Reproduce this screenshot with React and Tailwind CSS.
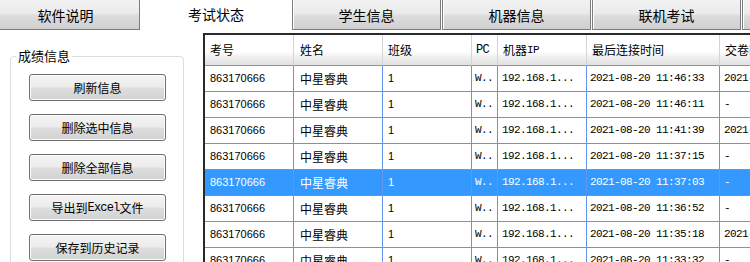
import React from 'react';

const rows = [
  ['2021-08-20 11:46:33', '2021-08-20 11:50:12', false],
  ['2021-08-20 11:46:11', '-', false],
  ['2021-08-20 11:41:39', '2021-08-20 11:45:02', false],
  ['2021-08-20 11:37:15', '-', false],
  ['2021-08-20 11:37:03', '-', true],
  ['2021-08-20 11:36:52', '-', false],
  ['2021-08-20 11:35:18', '2021-08-20 11:40:27', false],
  ['2021-08-20 11:33:32', '-', false],
];

const tabBg =
  'bg-[linear-gradient(180deg,#f2f2f2_0%,#ebebeb_45%,#dcdcdc_55%,#d0d0d0_100%)]';
const btnBg =
  'bg-[linear-gradient(180deg,#f4f4f4_0%,#ececec_48%,#dedede_52%,#d2d2d2_100%)]';

function Tab({ children, w, className = '' }) {
  return (
    <div
      className={`${w} h-[30px] shrink-0 flex items-center justify-center border border-t-0 border-[#7c7c7c] shadow-[inset_1px_0_0_#ffffff] ${tabBg} text-[14px] text-black ${className}`}
    >
      {children}
    </div>
  );
}

function Btn({ children }) {
  return (
    <div
      className={`w-[137px] h-[27px] flex items-center justify-center rounded-[3px] border border-[#707070] shadow-[inset_0_0_0_1px_#fbfbfb] ${btnBg} text-[12px] text-black`}
    >
      {children}
    </div>
  );
}

const headCell =
  'h-[31px] flex items-center border-r border-b border-r-[#d5d5d5] border-b-[#6495ed] text-[12px] whitespace-nowrap overflow-hidden';

export default function App() {
  const cellBase =
    'h-[26px] flex items-center border-r border-b border-[#6495ed] whitespace-nowrap overflow-hidden';
  const num = "font-['Liberation_Sans',sans-serif] text-[11px]";
  const mono = "font-['Liberation_Mono',monospace] text-[11px] tracking-[-0.6px]";
  return (
    <div className="w-[750px] h-[262px] overflow-hidden bg-white font-['Noto_Sans_CJK_SC',sans-serif] text-black leading-none">
      {/* tab bar */}
      <div className="flex gap-[1px] h-[30px]">
        <Tab w="w-[149px] -ml-[9px]">软件说明</Tab>
        <div className="w-[150px] h-[30px] shrink-0 flex items-center justify-center text-[14px] bg-white pb-[2px]">
          考试状态
        </div>
        <Tab w="w-[149px]">学生信息</Tab>
        <Tab w="w-[149px]">机器信息</Tab>
        <Tab w="w-[149px]">联机考试</Tab>
        <Tab w="w-[149px]">成绩</Tab>
      </div>

      <div className="flex">
        {/* left panel */}
        <div className="w-[203px] shrink-0 pl-[10px] pt-[26px]">
          <div className="relative w-[174px] h-[240px] border border-[#d5dfe5] rounded-[4px] pl-[18px] pt-[17px] flex flex-col gap-[13px]">
            <span className="absolute -top-[8px] left-[5px] bg-white px-[2px] text-[13px] leading-[14px]">
              成绩信息
            </span>
            <Btn>刷新信息</Btn>
            <Btn>删除选中信息</Btn>
            <Btn>删除全部信息</Btn>
            <Btn>
              导出到<span className="font-['Liberation_Mono',monospace] text-[12px] tracking-[-0.8px]">Excel</span>文件
            </Btn>
            <Btn>保存到历史记录</Btn>
          </div>
        </div>

        {/* table */}
        <div className="mt-[3px] border-t-2 border-l-2 border-[#2a2a2a] flex-1 min-w-0 overflow-hidden">
          <div className="grid grid-cols-[89px_89px_89px_26px_89px_133px_140px] w-max">
            <div className={`${headCell} pl-[5px] bg-[linear-gradient(180deg,#ffffff_0%,#ffffff_55%,#ebebeb_80%,#e2e2e2_100%)]`}>考号</div>
            <div className={`${headCell} pl-[6px] bg-[linear-gradient(180deg,#ffffff_0%,#ffffff_55%,#ebebeb_80%,#e2e2e2_100%)]`}>姓名</div>
            <div className={`${headCell} pl-[5px] bg-[linear-gradient(180deg,#ffffff_0%,#ffffff_55%,#ebebeb_80%,#e2e2e2_100%)]`}>班级</div>
            <div className={`${headCell} pl-[4px] bg-[linear-gradient(180deg,#ffffff_0%,#ffffff_55%,#ebebeb_80%,#e2e2e2_100%)] ${mono}`}>PC</div>
            <div className={`${headCell} pl-[5px] bg-[linear-gradient(180deg,#ffffff_0%,#ffffff_55%,#ebebeb_80%,#e2e2e2_100%)]`}>
              机器<span className={mono}>IP</span>
            </div>
            <div className={`${headCell} pl-[5px] bg-[linear-gradient(180deg,#ffffff_0%,#ffffff_55%,#ebebeb_80%,#e2e2e2_100%)]`}>最后连接时间</div>
            <div className={`${headCell} pl-[5px] bg-[linear-gradient(180deg,#ffffff_0%,#ffffff_55%,#ebebeb_80%,#e2e2e2_100%)]`}>交卷时间</div>

            {rows.map(([t, s, sel], i) => {
              const c = sel ? `${cellBase} bg-[#3399ff] text-white` : `${cellBase} bg-white text-black`;
              return (
                <React.Fragment key={i}>
                  <div className={`${c} pl-[5px] ${num}`}>863170666</div>
                  <div className={`${c} pl-[6px] text-[12px]`}>中星睿典</div>
                  <div className={`${c} pl-[5px] ${num}`}>1</div>
                  <div className={`${c} pl-[3px] ${mono}`}>W..</div>
                  <div className={`${c} pl-[4px] ${mono}`}>192.168.1...</div>
                  <div className={`${c} pl-[3px] ${mono}`}>{t}</div>
                  <div className={`${c} pl-[4px] ${mono}`}>{s}</div>
                </React.Fragment>
              );
            })}
          </div>
        </div>
      </div>
    </div>
  );
}
